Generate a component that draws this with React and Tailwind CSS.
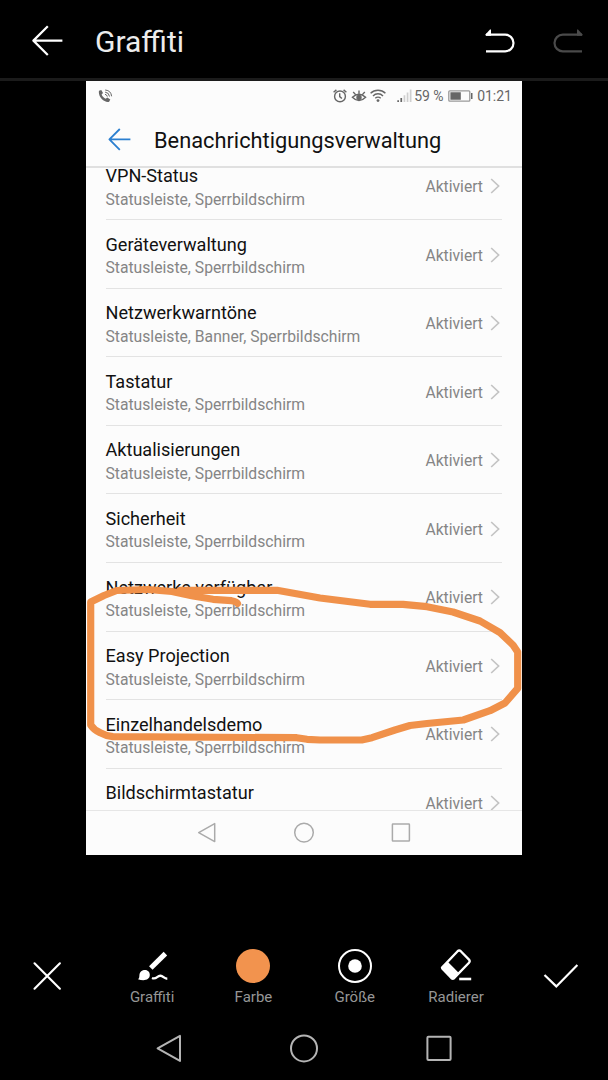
const entries = [
  { title: "VPN-Status", places: "Statusleiste, Sperrbildschirm" },
  { title: "Geräteverwaltung", places: "Statusleiste, Sperrbildschirm" },
  { title: "Netzwerkwarntöne", places: "Statusleiste, Banner, Sperrbildschirm" },
  { title: "Tastatur", places: "Statusleiste, Sperrbildschirm" },
  { title: "Aktualisierungen", places: "Statusleiste, Sperrbildschirm" },
  { title: "Sicherheit", places: "Statusleiste, Sperrbildschirm" },
  { title: "Netzwerke verfügbar", places: "Statusleiste, Sperrbildschirm" },
  { title: "Easy Projection", places: "Statusleiste, Sperrbildschirm" },
  { title: "Einzelhandelsdemo", places: "Statusleiste, Sperrbildschirm" },
  { title: "Bildschirmtastatur", places: "Statusleiste, Sperrbildschirm" },
];

function UndoIcon({ className }) {
  return (
    <svg className={className} width="30" height="24" viewBox="0 0 30 24" fill="none">
      <path d="M1 5.7H20.2a8.3 8.3 0 0 1 0 16.6H1" stroke="currentColor" strokeWidth="2.2" />
      <path d="M.7 5.2L5 0.6H6V6.8H.7z" fill="currentColor" />
    </svg>
  );
}

function EditorHeader() {
  return (
    <header className="flex h-[81px] shrink-0 items-center border-b-[3px] border-[#1b1b1b] pt-1 pl-8">
      <svg width="31" height="32" viewBox="0 0 31 32" fill="none" stroke="#fff" strokeWidth="2.2">
        <path d="M15.8 1.2L1.4 15.6l14.4 14.4M1.4 15.6H30.4" strokeLinejoin="round" />
      </svg>
      <h1 className="mt-px ml-8 text-[30px] leading-9 font-normal text-[#ececec]">Graffiti</h1>
      <UndoIcon className="-mt-px ml-auto text-white" />
      <UndoIcon className="-mt-px mr-[25px] ml-[38px] -scale-x-100 text-[#4a4a4a]" />
    </header>
  );
}

function StatusBar() {
  return (
    <div className="flex h-[30px] shrink-0 items-center pr-[10px] pl-3 text-[14px] text-[#666]">
      <svg width="15" height="14" viewBox="0 0 15 14" fill="none" stroke="currentColor">
        <path
          d="M1 1.8L3.3.9 5 4 3.6 5.4c.8 2 2.2 3.5 4.1 4.4L9.3 8.5l3 1.9-1.2 2.4C6.6 14.2-.3 8 1 1.8z"
          fill="currentColor"
          stroke="none"
        />
        <path d="M7 5.3a2.8 2.8 0 0 1 2.3 2.3M7.1 3.1a5 5 0 0 1 4.4 4.4M7.2 1a7 7 0 0 1 6.4 6.3" />
      </svg>
      <svg className="ml-auto" width="14" height="14" viewBox="0 0 14 14" fill="none" stroke="currentColor" strokeWidth="1.4">
        <circle cx="7" cy="7.4" r="5.4" />
        <path d="M6.7 4.2v3.4l2.2 2M.6 3.3L3.4.9M10.6.9l2.8 2.4" />
      </svg>
      <svg className="ml-[4px]" width="16" height="14" viewBox="0 0 16 14" fill="none" stroke="currentColor" strokeWidth="1.4">
        <path d="M1.4 8.3Q8 2.2 14.6 8.3 8 15 1.4 8.3zM8 4.5V1.4M4.4 5.4L2.2 3M11.6 5.4L13.8 3" />
        <circle cx="8" cy="8.4" r="2" fill="currentColor" />
      </svg>
      <svg className="-mt-[2px] ml-[3px]" width="16" height="13" viewBox="0 0 16 13" fill="none" stroke="currentColor" strokeWidth="1.4">
        <path d="M.6 4.3a10.4 10.4 0 0 1 14.8 0M3 6.9a7 7 0 0 1 10 0M5.3 9.3a3.8 3.8 0 0 1 5.4 0" />
        <circle cx="8" cy="11.6" r="1.4" fill="currentColor" stroke="none" />
      </svg>
      <svg className="ml-[11px]" width="15" height="14" viewBox="0 0 15 14">
        <path d="M.3 11.3h1.7V13H.3zM3.4 9h1.7v4H3.4z" fill="#666" />
        <path d="M6.6 6.2h1.7V13H6.6zM9.7 3.4h1.7V13H9.7zM12.8.6h1.7V13h-1.7z" fill="#cfcfcf" />
      </svg>
      <span className="ml-[2px] whitespace-nowrap">59 %</span>
      <svg className="ml-1" width="25" height="12" viewBox="0 0 25 12" fill="none">
        <rect x=".8" y=".8" width="21" height="10.4" rx="1" stroke="#999" strokeWidth="1.3" />
        <path d="M2.4 2.3h10.4v7.4H2.4zM23 3h1.5v6H23z" fill="#666" />
      </svg>
      <span className="ml-[4.5px]">01:21</span>
    </div>
  );
}

function NotificationRow({ title, places }) {
  return (
    <li className="flex h-[68.55px] shrink-0 items-center border-b border-[#e3e3e3] pt-[3px]">
      <div className="-ml-[0.5px] flex-1 pt-px whitespace-nowrap">
        <p className="text-[18.1px] leading-[23.5px] text-[#111]">{title}</p>
        <p className="text-[15.7px] leading-[23px] text-[#858585]">{places}</p>
      </div>
      <span className="text-[15.65px] leading-5 text-[#858585]">Aktiviert</span>
      <svg className="-mt-[2px] mr-[2px] ml-[7px]" width="10" height="16" viewBox="0 0 10 16" fill="none" stroke="#c4c4c4" strokeWidth="1.7">
        <path d="M1.2 1L8.6 8l-7.4 7" />
      </svg>
    </li>
  );
}

function Screenshot() {
  return (
    <main className="relative mx-auto flex h-[774px] w-[436px] shrink-0 flex-col bg-[#fcfcfc]">
      <StatusBar />
      <div className="flex h-[57px] shrink-0 items-center border-b-2 border-[#e0e0e0] pt-[3px] pl-[22px]">
        <svg width="23" height="24" viewBox="0 0 23 24" fill="none" stroke="#2b7fd0" strokeWidth="1.8">
          <path d="M11.8 1L1.4 11.4l10.4 10.5M1.4 11.4H22.4" strokeLinejoin="round" />
        </svg>
        <h2 className="mt-px ml-[23px] text-[21.8px] leading-7 font-normal text-[#111]">Benachrichtigungsverwaltung</h2>
      </div>
      <ul className="-mt-px flex h-[643px] flex-col overflow-hidden px-5">
        <li className="-mt-[15.3px]" />
        {entries.map((entry) => (
          <NotificationRow key={entry.title} {...entry} />
        ))}
      </ul>
      <div className="flex flex-1 items-center justify-center gap-[76px] border-t border-[#e6e6e6]">
        <svg width="20" height="22" viewBox="0 0 20 22" fill="none" stroke="#aaa" strokeWidth="1.5">
          <path d="M17.7 1.6v18L1.7 10.6z" strokeLinejoin="round" />
        </svg>
        <svg width="22" height="22" viewBox="0 0 22 22" fill="none" stroke="#aaa" strokeWidth="1.5">
          <circle cx="11" cy="10.6" r="9.3" />
        </svg>
        <svg width="20" height="22" viewBox="0 0 20 22" fill="none" stroke="#aaa" strokeWidth="1.5">
          <rect x="1.4" y="2" width="17" height="17" rx=".6" />
        </svg>
      </div>

      {/* freehand marker stroke on top of the picture */}
      <svg
        className="absolute inset-0"
        width="436"
        height="774"
        viewBox="86 81 436 774"
        fill="none"
        stroke="#f0914a"
        strokeWidth="7.2"
        strokeLinecap="round"
        strokeLinejoin="round"
      >
        <path d="M237.5 603.5Q236.5 601.5 231.5 600.7L213 599.3 193 596 172 591.5 148 589.5 116.7 590.5 104 595.5 90.7 602V725Q94 730 100 732.6 106 736 113 736.7L296.7 737.7 307 739.3 320 740H361.7L372 737.7 395 730 410 725.5 427 723.5 463.3 720 490 710.7 505 703 517.7 688.3V652L513 645 500 632.7 480 621 453 612 427 606.7 403 604.3H370L340 600.5 320 598 277 590.3H180" />
      </svg>
    </main>
  );
}

function Tool({ label, children }) {
  return (
    <button className="flex w-[101.3px] flex-col items-center gap-[3px]">
      <svg width="36" height="36" viewBox="0 0 36 36" fill="none">
        {children}
      </svg>
      <span className="text-[15px] leading-5 text-[#969696]">{label}</span>
    </button>
  );
}

function Toolbar() {
  return (
    <div className="mt-[93px] flex h-[60px] shrink-0 items-start">
      <svg className="mt-[13px] ml-8 shrink-0" width="30" height="30" viewBox="0 0 30 30" stroke="#fff" strokeWidth="2.1" strokeLinecap="round">
        <path d="M2.5 2.3l25.4 25.4M27.9 2.3L2.5 27.7" />
      </svg>
      <div className="ml-[39.5px] flex">
        <Tool label="Graffiti">
          <path d="M16.8 20L31.4 5.6" stroke="#fff" strokeWidth="5" />
          <path d="M4 31.2c1.3-.7 1.3-2 1.4-4 .3-6.4 10.2-7 10.4-.4.1 5.4-6 6.4-11.8 4.4z" fill="#fff" />
          <path d="M18 30c4.5 2 5.1-2.6 8.5-2.3 2.8.2 3.4 2.9 6.8 3" stroke="#fff" strokeWidth="2.4" />
        </Tool>
        <Tool label="Farbe">
          <circle cx="18" cy="18" r="17" fill="#f2934e" />
        </Tool>
        <Tool label="Größe">
          <circle cx="18" cy="18" r="16" stroke="#fff" strokeWidth="2" />
          <circle cx="18" cy="18" r="6.8" fill="#fff" />
        </Tool>
        <Tool label="Radierer">
          <path d="M19.6 3.2Q21.2 1.7 22.8 3.2L31 11.6Q32.4 13.3 31 14.8L15.8 30.4 4 19.6z" stroke="#fff" strokeWidth="2.3" strokeLinejoin="round" />
          <path d="M9.7 13.8L21.4 25.6 15.9 31.5Q14.7 32.4 13.2 31.5L3.6 21.6Q2.6 20.4 3.6 19.3z" fill="#fff" />
          <path d="M21.2 31h12" stroke="#fff" strokeWidth="2.6" />
        </Tool>
      </div>
      <svg className="mt-[15px] ml-[36px] shrink-0" width="36" height="26" viewBox="0 0 36 26" fill="none" stroke="#fff" strokeWidth="2.2">
        <path d="M1.5 12L13.3 23.4 34.4 2" />
      </svg>
    </div>
  );
}

function SystemNav() {
  return (
    <nav className="flex flex-1 items-center justify-center gap-[106px] pt-[8px]">
      <svg width="28" height="30" viewBox="0 0 28 30" fill="none" stroke="#b4b4b4" strokeWidth="2">
        <path d="M25 2.9v25L2.6 15.4z" strokeLinejoin="round" />
      </svg>
      <svg width="30" height="30" viewBox="0 0 30 30" fill="none" stroke="#b4b4b4" strokeWidth="2">
        <circle cx="15" cy="15.4" r="13" />
      </svg>
      <svg width="28" height="30" viewBox="0 0 28 30" fill="none" stroke="#b4b4b4" strokeWidth="2">
        <rect x="2.4" y="3.8" width="23.2" height="23.2" rx="1" />
      </svg>
    </nav>
  );
}

function App() {
  return (
    <div className="flex h-[1080px] w-[608px] flex-col overflow-hidden bg-black font-['Roboto',sans-serif]">
      <EditorHeader />
      <Screenshot />
      <Toolbar />
      <SystemNav />
    </div>
  );
}

export default App;
